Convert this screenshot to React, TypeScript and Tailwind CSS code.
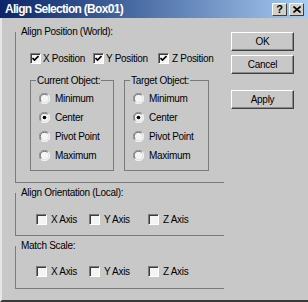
import React from 'react';

const font = { fontFamily: '"Liberation Sans", Arial, sans-serif' };

function Check({ checked = false }: { checked?: boolean }) {
  return (
    <span className="w-[11px] h-[11px] shrink-0 bg-[#f4f4f4] border border-t-[#7b7b7b] border-l-[#7b7b7b] border-r-white border-b-white shadow-[inset_1px_1px_0_#3c3c3c] flex items-center justify-center">
      {checked && (
        <svg width="7" height="7" viewBox="0 0 7 7">
          <path d="M0.5 3 L2.5 5 L6.5 1" stroke="#000" strokeWidth="1.6" fill="none" />
        </svg>
      )}
    </span>
  );
}

function Radio({ checked = false }: { checked?: boolean }) {
  return (
    <svg width="11" height="11" viewBox="0 0 12 12" className="shrink-0">
      <circle cx="6" cy="6" r="5.5" fill="#f4f4f4" />
      <path d="M10.1 1.9 A5.6 5.6 0 0 0 1.9 10.1" stroke="#8a8a8a" strokeWidth="1" fill="none" />
      <path d="M1.9 10.1 A5.6 5.6 0 0 0 10.1 1.9" stroke="#ffffff" strokeWidth="1" fill="none" />
      <path d="M9.3 2.7 A4.5 4.5 0 0 0 2.7 9.3" stroke="#5a5a5a" strokeWidth="1" fill="none" />
      <path d="M2.7 9.3 A4.5 4.5 0 0 0 9.3 2.7" stroke="#dcdcdc" strokeWidth="1" fill="none" />
      {checked && <circle cx="6" cy="6" r="2" fill="#000" />}
    </svg>
  );
}

function Group({ label, className, children }: { label: string; className: string; children: React.ReactNode }) {
  return (
    <div className={`relative border-l border-b border-[#7b7b7b] ${className}`}>
      <span className="absolute -top-[7px] left-[5px] leading-[13px] bg-[#c8c8c8] pr-px">{label}</span>
      {children}
    </div>
  );
}

function SubGroup({ label, width, selected }: { label: string; width: string; selected: number }) {
  const items = ['Minimum', 'Center', 'Pivot Point', 'Maximum'];
  return (
    <div className={`relative border border-[#7b7b7b] h-[91px] pt-[8px] pl-[8px] ${width}`}>
      <span className="absolute -top-[7px] left-[5px] leading-[13px] bg-[#c8c8c8] px-px">{label}</span>
      {items.map((it, i) => (
        <div key={it} className="flex items-center gap-[5px] h-[19px]">
          <Radio checked={i === selected} />
          <span>{it}</span>
        </div>
      ))}
    </div>
  );
}

function Button({ label, className = '' }: { label: string; className?: string }) {
  return (
    <button className={`w-[63px] h-[19px] flex items-center justify-center bg-[#c8c8c8] border border-t-white border-l-white border-r-[#404040] border-b-[#404040] shadow-[inset_-1px_-1px_0_#8a8a8a] ${className}`}>
      {label}
    </button>
  );
}

function AxisRow() {
  return (
    <div className="flex items-center h-[11px]">
      <div className="flex items-center gap-[4px] w-[53px]"><Check /><span>X Axis</span></div>
      <div className="flex items-center gap-[4px] w-[59px]"><Check /><span>Y Axis</span></div>
      <div className="flex items-center gap-[4px]"><Check /><span>Z Axis</span></div>
    </div>
  );
}

export default function App() {
  return (
    <div style={font} className="w-[308px] h-[302px] bg-[#c8c8c8] flex flex-col overflow-hidden text-[10px] tracking-[-0.3px] text-black select-none">
      {/* Title bar */}
      <div className="h-[18px] shrink-0 flex items-center justify-between pl-[5px] pr-[4px] bg-gradient-to-r from-[#0c2468] to-[#a8ccf2]">
        <span className="text-white font-bold text-[12px] tracking-[-0.7px] leading-none">Align Selection (Box01)</span>
        <div className="flex gap-[2px]">
          <span className="w-[15px] h-[13px] flex items-center justify-center bg-[#d4d0c8] border border-t-white border-l-white border-r-[#404040] border-b-[#404040] text-[11px] font-bold leading-none tracking-normal">?</span>
          <span className="w-[15px] h-[13px] flex items-center justify-center bg-[#d4d0c8] border border-t-white border-l-white border-r-[#404040] border-b-[#404040]">
            <svg width="8" height="7" viewBox="0 0 8 7">
              <path d="M0.5 0.5 L7.5 6.5 M7.5 0.5 L0.5 6.5" stroke="#000" strokeWidth="1.6" />
            </svg>
          </span>
        </div>
      </div>

      <div className="flex-1 flex border-l-2 border-l-[#e6e6e6] border-b-2 border-b-[#3a3a3a]">
        {/* Left column */}
        <div className="pl-[13px] pt-[14px] flex flex-col">
          <Group label="Align Position (World):" className="w-[209px] h-[151px] pt-[21px] pl-[14px]">
            <div className="flex items-center h-[11px]">
              <div className="flex items-center gap-[2px] w-[63px]"><Check checked /><span>X Position</span></div>
              <div className="flex items-center gap-[2px] w-[65px]"><Check checked /><span>Y Position</span></div>
              <div className="flex items-center gap-[3px]"><Check checked /><span>Z Position</span></div>
            </div>
            <div className="mt-[16px] flex gap-[10px]">
              <SubGroup label="Current Object:" width="w-[84px]" selected={1} />
              <SubGroup label="Target Object:" width="w-[85px]" selected={1} />
            </div>
          </Group>

          <Group label="Align Orientation (Local):" className="mt-[10px] w-[209px] h-[43px] pt-[21px] pl-[20px]">
            <AxisRow />
          </Group>

          <Group label="Match Scale:" className="mt-[10px] w-[209px] h-[43px] pt-[20px] pl-[20px]">
            <AxisRow />
          </Group>
        </div>

        {/* Right column */}
        <div className="ml-[7px] pt-[14px] flex flex-col">
          <Button label="OK" />
          <Button label="Cancel" className="mt-[4px]" />
          <Button label="Apply" className="mt-[16px]" />
        </div>
      </div>
    </div>
  );
}
